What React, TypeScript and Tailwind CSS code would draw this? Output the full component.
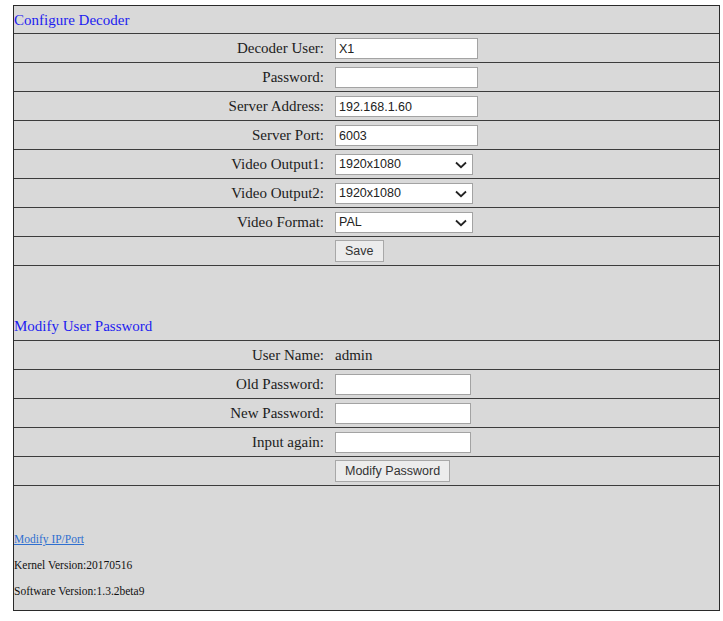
import type { ReactNode } from 'react'

const serif = 'font-["Liberation_Serif",serif]'
const sans = 'font-["Liberation_Sans",Arial,sans-serif]'

function Row({ label, children }: { label?: string; children?: ReactNode }) {
  return (
    <div className="flex h-[29px] items-center border-b border-[#3c3c3c]">
      <div className={`w-[315px] shrink-0 pr-[5px] pt-[1px] text-right text-[15px] text-[#1c1c1c] ${serif}`}>{label}</div>
      <div className="flex items-center pl-[6px]">{children}</div>
    </div>
  )
}

function TextBox({ value = '', width }: { value?: string; width: string }) {
  return (
    <input
      defaultValue={value}
      className={`${width} h-[21px] border border-[#a3a3a3] bg-white px-[3px] pt-[1px] text-[12.5px] text-[#222] outline-none ${sans}`}
    />
  )
}

function Select({ value }: { value: string }) {
  return (
    <div className={`relative flex h-[21px] w-[138px] items-center border border-[#a3a3a3] bg-white px-[3px] text-[12.5px] text-[#222] ${sans}`}>
      {value}
      <svg className="absolute right-[5px] top-[6px]" width="12" height="8" viewBox="0 0 12 8">
        <path d="M1 1.5 L6 6.2 L11 1.5" fill="none" stroke="#222" strokeWidth="1.8" />
      </svg>
    </div>
  )
}

function Btn({ children }: { children: ReactNode }) {
  return (
    <button
      className={`h-[22px] border border-[#a8a8a8] bg-[#ececec] px-[9px] text-[12.5px] text-[#333] ${sans}`}
    >
      {children}
    </button>
  )
}

export default function App() {
  return (
    <div className="min-h-[621px] bg-white pl-[13px] pt-[5px]">
      <div className="w-[707px] border border-[#2a2a2a] bg-[#d9d9d9]">
        <div className="flex h-[28px] items-center border-b border-[#3c3c3c] pt-[2px]">
          <span className={`text-[15px] text-[#1d1df0] ${serif}`}>Configure Decoder</span>
        </div>
        <Row label="Decoder User:"><TextBox value="X1" width="w-[143px]" /></Row>
        <Row label="Password:"><TextBox width="w-[143px]" /></Row>
        <Row label="Server Address:"><TextBox value="192.168.1.60" width="w-[143px]" /></Row>
        <Row label="Server Port:"><TextBox value="6003" width="w-[143px]" /></Row>
        <Row label="Video Output1:"><Select value="1920x1080" /></Row>
        <Row label="Video Output2:"><Select value="1920x1080" /></Row>
        <Row label="Video Format:"><Select value="PAL" /></Row>
        <Row><Btn>Save</Btn></Row>

        <div className="flex h-[75px] items-end border-b border-[#3c3c3c] pb-[3px]">
          <span className={`text-[15px] text-[#1d1df0] ${serif}`}>Modify User Password</span>
        </div>
        <Row label="User Name:">
          <span className={`text-[15px] text-[#1c1c1c] ${serif}`}>admin</span>
        </Row>
        <Row label="Old Password:"><TextBox width="w-[136px]" /></Row>
        <Row label="New Password:"><TextBox width="w-[136px]" /></Row>
        <Row label="Input again:"><TextBox width="w-[136px]" /></Row>
        <Row><Btn>Modify Password</Btn></Row>

        <div className={`flex h-[124px] flex-col pt-[45px] text-[11.5px] text-[#111] ${serif}`}>
          <a href="#" className="h-[26px] text-[#2f6fd0] underline">Modify IP/Port</a>
          <p className="h-[26px]">Kernel Version:20170516</p>
          <p>Software Version:1.3.2beta9</p>
        </div>
      </div>
    </div>
  )
}
